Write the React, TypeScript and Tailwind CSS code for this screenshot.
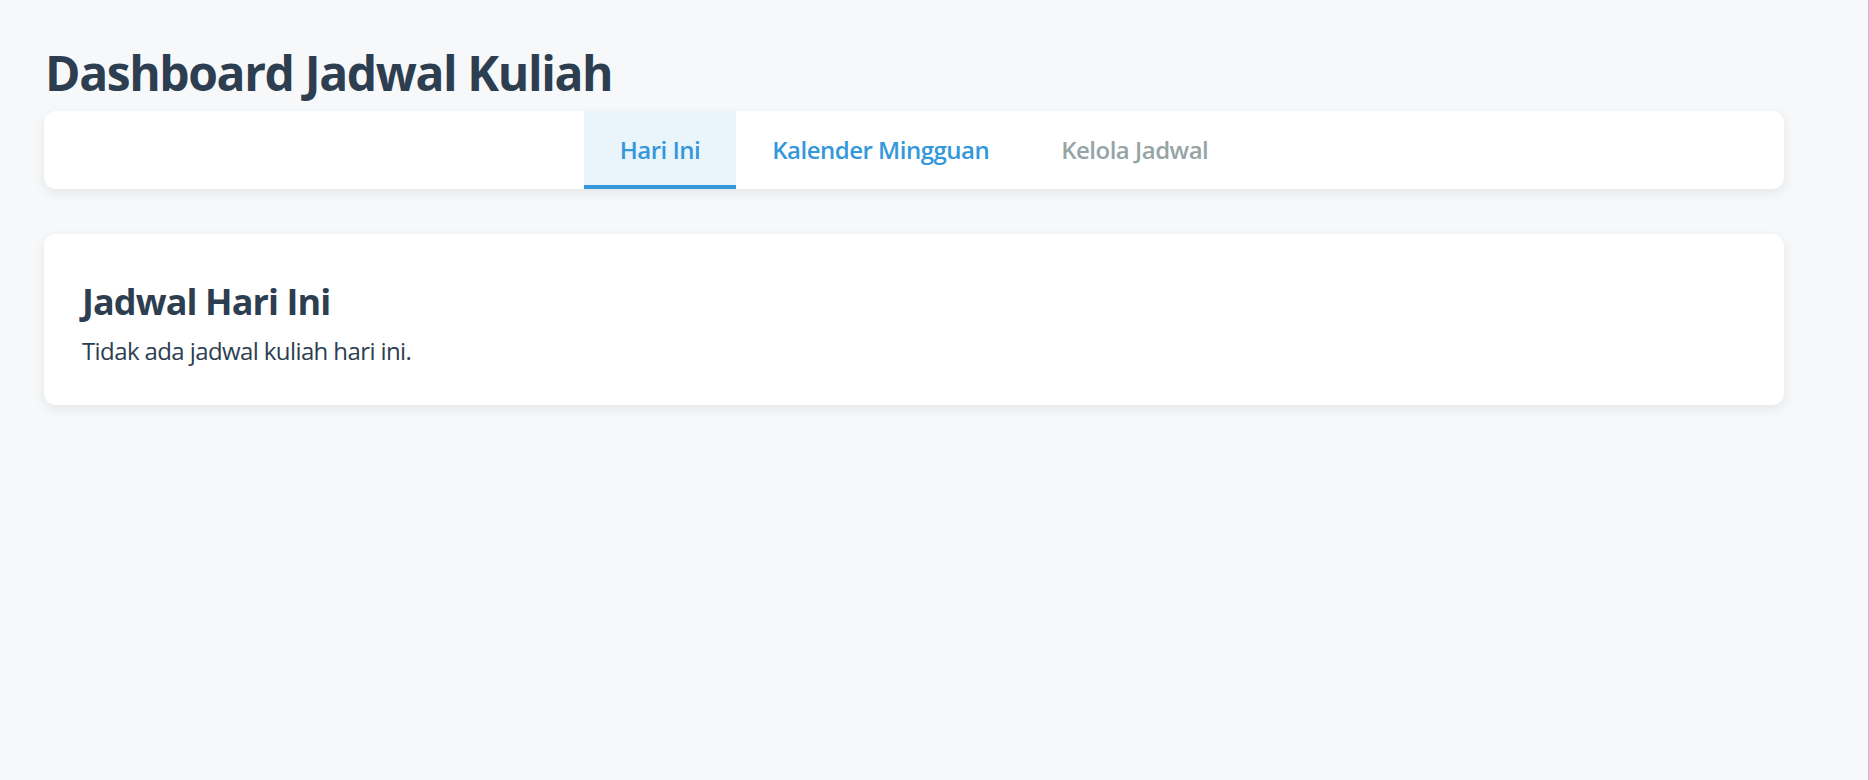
import React from "react";

export default function App() {
  const font = { fontFamily: '"Open Sans", "Noto Sans", sans-serif' };
  return (
    <div className="flex min-h-screen w-full bg-[#f7f8fa]" style={font}>
      <div className="flex-1 pl-[44px] pr-[84px]">
        <div className="max-w-[1740px]">
          <h1 className="pt-[41px] text-[48px] leading-[64px] font-bold text-[#2c3e50] tracking-[-1.4px] pl-[1px]">
            Dashboard Jadwal Kuliah
          </h1>
          <nav className="mt-[6px] flex h-[78px] justify-center rounded-[12px] bg-white shadow-[0_4px_12px_rgba(0,0,0,0.08)]">
            <div className="flex h-full items-center border-b-4 border-[#3498db] bg-[#eaf4fb] px-[36px] pt-[4px] text-[24px] font-semibold text-[#3498db] tracking-[-0.5px]">
              Hari Ini
            </div>
            <div className="flex h-full items-center border-b-4 border-transparent px-[36px] pt-[4px] text-[24px] font-semibold text-[#3498db] tracking-[-0.5px]">
              Kalender Mingguan
            </div>
            <div className="flex h-full items-center border-b-4 border-transparent px-[36px] pt-[4px] text-[24px] font-semibold text-[#95a5a6] tracking-[-0.5px]">
              Kelola Jadwal
            </div>
          </nav>
          <section className="mt-[45px] h-[171px] rounded-[12px] bg-white px-[38px] pt-[44px] shadow-[0_4px_12px_rgba(0,0,0,0.08)]">
            <h2 className="text-[36px] leading-[48px] font-bold text-[#2c3e50] tracking-[-0.9px]">
              Jadwal Hari Ini
            </h2>
            <p className="mt-[9px] text-[24px] leading-[32px] text-[#2c3e50] tracking-[-0.6px]">
              Tidak ada jadwal kuliah hari ini.
            </p>
          </section>
        </div>
      </div>
      <div className="w-[4px] shrink-0 border-l border-[#eba9c2] bg-[#f8bcd3]" />
    </div>
  );
}
